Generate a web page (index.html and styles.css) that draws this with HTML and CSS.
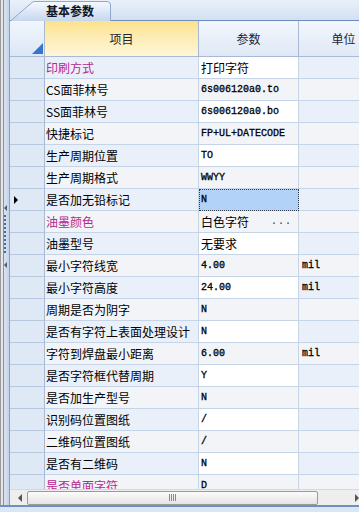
FILE: index.html
```html
<!DOCTYPE html>
<html lang="zh-CN">
<head>
  <meta charset="UTF-8">
  <title>基本参数</title>
  <link rel="stylesheet" href="styles.css">
</head>
<body>
  <div class="frame">
    <!-- left splitter strip -->
    <div class="side">
      <span class="arrow a1"></span>
      <span class="dots"></span>
      <span class="arrow a2"></span>
    </div>

    <div class="main">
      <!-- tab strip -->
      <div class="tabs">
        <div class="tab">
          <svg class="tab-bg" width="102" height="21" viewBox="0 0 102 21">
            <defs>
              <linearGradient id="tg" x1="0" y1="0" x2="0" y2="1">
                <stop offset="0" stop-color="#f6f9fe"/>
                <stop offset="1" stop-color="#c6d7ee"/>
              </linearGradient>
            </defs>
            <path d="M0.5 21 L22 2.5 Q23 1.5 25 1.5 L97 1.5 Q100.5 1.5 100.5 5 L100.5 21" fill="url(#tg)" stroke="#8ea9cf"/>
          </svg>
          <span class="tab-text">基本参数</span>
        </div>
      </div>

      <div class="grid">
        <div class="head">
          <div class="corner"><span class="tri"></span></div>
          <div class="hc item-h">项目</div>
          <div class="hc">参数</div>
          <div class="hc">单位</div>
        </div>

        <div class="rows">
          <div class="row odd"><div class="rh"></div><div class="c item pink">印刷方式</div><div class="c val cjk">打印字符</div><div class="c unit"></div></div>
          <div class="row"><div class="rh"></div><div class="c item">CS面菲林号</div><div class="c val">6s006120a0.to</div><div class="c unit"></div></div>
          <div class="row odd"><div class="rh"></div><div class="c item">SS面菲林号</div><div class="c val">6s006120a0.bo</div><div class="c unit"></div></div>
          <div class="row"><div class="rh"></div><div class="c item">快捷标记</div><div class="c val">FP+UL+DATECODE</div><div class="c unit"></div></div>
          <div class="row odd"><div class="rh"></div><div class="c item">生产周期位置</div><div class="c val">TO</div><div class="c unit"></div></div>
          <div class="row"><div class="rh"></div><div class="c item">生产周期格式</div><div class="c val">WWYY</div><div class="c unit"></div></div>
          <div class="row odd"><div class="rh cur"></div><div class="c item">是否加无铅标记</div><div class="c val sel">N</div><div class="c unit"></div></div>
          <div class="row"><div class="rh"></div><div class="c item pink">油墨颜色</div><div class="c val cjk">白色字符<span class="more">...</span></div><div class="c unit"></div></div>
          <div class="row odd"><div class="rh"></div><div class="c item">油墨型号</div><div class="c val cjk">无要求</div><div class="c unit"></div></div>
          <div class="row"><div class="rh"></div><div class="c item">最小字符线宽</div><div class="c val">4.00</div><div class="c unit">mil</div></div>
          <div class="row odd"><div class="rh"></div><div class="c item">最小字符高度</div><div class="c val">24.00</div><div class="c unit">mil</div></div>
          <div class="row"><div class="rh"></div><div class="c item">周期是否为阴字</div><div class="c val">N</div><div class="c unit"></div></div>
          <div class="row odd"><div class="rh"></div><div class="c item">是否有字符上表面处理设计</div><div class="c val">N</div><div class="c unit"></div></div>
          <div class="row"><div class="rh"></div><div class="c item">字符到焊盘最小距离</div><div class="c val">6.00</div><div class="c unit">mil</div></div>
          <div class="row odd"><div class="rh"></div><div class="c item">是否字符框代替周期</div><div class="c val">Y</div><div class="c unit"></div></div>
          <div class="row"><div class="rh"></div><div class="c item">是否加生产型号</div><div class="c val">N</div><div class="c unit"></div></div>
          <div class="row odd"><div class="rh"></div><div class="c item">识别码位置图纸</div><div class="c val">/</div><div class="c unit"></div></div>
          <div class="row"><div class="rh"></div><div class="c item">二维码位置图纸</div><div class="c val">/</div><div class="c unit"></div></div>
          <div class="row odd"><div class="rh"></div><div class="c item">是否有二维码</div><div class="c val">N</div><div class="c unit"></div></div>
          <div class="row"><div class="rh"></div><div class="c item pink">是否单面字符</div><div class="c val">D</div><div class="c unit"></div></div>
        </div>

        <!-- horizontal scrollbar -->
        <div class="hscroll">
          <span class="sb-arrow left"></span>
          <div class="track">
            <div class="thumb"><span class="grip"></span></div>
          </div>
          <span class="sb-arrow right"></span>
        </div>
      </div>
    </div>
  </div>
  <div class="bottom"></div>
</body>
</html>
```

FILE: styles.css
```css
* {
  margin: 0;
  padding: 0;
  box-sizing: border-box;
}
body {
  width: 359px;
  height: 512px;
  overflow: hidden;
  background: #dbe6f4;
  font-family: "Noto Sans CJK SC", "Noto Sans", sans-serif;
  font-size: 12px;
  color: #000;
}
.frame {
  display: flex;
  height: 505px;
}

/* left strip */
.side {
  width: 10px;
  flex: none;
  position: relative;
  background: linear-gradient(to right, #9a9a9a 0, #9a9a9a 1px, #e6e6e6 1px, #e6e6e6 3px, #7f8fa6 3px, #7f8fa6 4px, #d8e3f2 4px, #c4d3e9 9px, #8aa0c0 9px);
}
.side .arrow {
  position: absolute;
  left: 4px;
  width: 0;
  height: 0;
  border-top: 3px solid transparent;
  border-bottom: 3px solid transparent;
  border-right: 3px solid #4a5a78;
}
.side .a1 { top: 205px; }
.side .a2 { top: 262px; }
.side .dots {
  position: absolute;
  left: 4px;
  top: 215px;
  width: 2px;
  height: 38px;
  background: repeating-linear-gradient(to bottom, #4b6b9c 0, #4b6b9c 2px, transparent 2px, transparent 4px);
}

.main {
  flex: 1;
  min-width: 0;
  display: flex;
  flex-direction: column;
}

/* tabs */
.tabs {
  height: 21px;
  flex: none;
  background: linear-gradient(#e9f0fa, #d3e0f2);
  border-bottom: 1px solid #6e8fbd;
}
.tab {
  position: relative;
  width: 102px;
  height: 20px;
  display: flex;
  align-items: center;
  padding-left: 36px;
}
.tab-bg {
  position: absolute;
  left: 0;
  top: 0;
}
.tab-text {
  position: relative;
  font-weight: bold;
  font-size: 12px;
  color: #10151f;
  line-height: 20px;
  padding-top: 1px;
}

/* grid */
.grid {
  flex: 1;
  display: flex;
  flex-direction: column;
  min-height: 0;
  background: #fff;
}
.head {
  display: flex;
  height: 36px;
  flex: none;
  border-bottom: 1px solid #a7b9d4;
}
.corner {
  width: 35px;
  flex: none;
  position: relative;
  background: linear-gradient(#f1f6fc, #dce7f5);
  border-right: 1px solid #a7b9d4;
}
.corner .tri {
  position: absolute;
  right: 1px;
  bottom: 2px;
  width: 0;
  height: 0;
  border-left: 11px solid transparent;
  border-bottom: 11px solid #3a74c8;
}
.hc {
  width: 100px;
  flex: none;
  display: flex;
  align-items: center;
  justify-content: center;
  background: linear-gradient(#f3f7fd, #dfe8f5);
  border-right: 1px solid #a7b9d4;
  color: #1e2430;
}
.hc.item-h {
  width: 154px;
  background: linear-gradient(#fce28a, #fdecb4 45%, #fff6d8);
}
.hc:last-child {
  width: 90px;
}

.rows {
  flex: 1;
  overflow: hidden;
}
.row {
  display: flex;
  height: 22px;
}
.rh {
  width: 35px;
  flex: none;
  position: relative;
  background: #dfe8f5;
  border-right: 1px solid #a7b9d4;
  border-bottom: 1px solid #b6c7df;
}
.rh.cur::after {
  content: "";
  position: absolute;
  left: 4px;
  top: 7px;
  border-top: 4px solid transparent;
  border-bottom: 4px solid transparent;
  border-left: 4px solid #000;
}
.c {
  flex: none;
  height: 22px;
  display: flex;
  align-items: center;
  padding-left: 2px;
  white-space: nowrap;
  overflow: hidden;
  border-right: 1px solid #c6d4e8;
  border-bottom: 1px solid #c6d4e8;
  background: #f2f4f7;
}
.item {
  width: 154px;
  padding-left: 1px;
}
.val {
  width: 100px;
  font-family: "Liberation Mono", monospace;
  font-size: 10px;
  color: #000;
  position: relative;
  -webkit-text-stroke: 0.3px #000;
}
.val.cjk {
  font-family: "Noto Sans CJK SC", sans-serif;
  font-size: 12px;
  -webkit-text-stroke: 0;
}
.unit {
  width: 90px;
  font-family: "Liberation Mono", monospace;
  font-size: 10px;
  padding-left: 3px;
  -webkit-text-stroke: 0.3px #000;
}
.row.odd .item,
.row.odd .unit {
  background: #e9f0fa;
}
.row.odd .val {
  background: #fff;
}
.val.sel {
  background: #b3d2f7 !important;
  outline: 1px dotted #303a4a;
  outline-offset: -1px;
}
.more {
  position: absolute;
  right: 6px;
  font-family: "Liberation Mono", monospace;
  font-size: 10px;
  letter-spacing: 1px;
  color: #333;
  -webkit-text-stroke: 0;
}
.pink {
  color: #b8268f;
}

/* scrollbar */
.hscroll {
  height: 16px;
  flex: none;
  display: flex;
  align-items: center;
  background: #eeeeee;
  border-top: 1px solid #d8d8d8;
}
.sb-arrow {
  width: 0;
  height: 0;
  border-top: 4px solid transparent;
  border-bottom: 4px solid transparent;
  flex: none;
}
.sb-arrow.left {
  border-right: 4px solid #555;
  margin: 0 5px 0 8px;
}
.sb-arrow.right {
  border-left: 4px solid #555;
  margin: 0 0 0 32px;
}
.track {
  flex: 1;
  height: 14px;
}
.thumb {
  width: 291px;
  height: 14px;
  border: 1px solid #9a9a9a;
  border-radius: 2px;
  background: linear-gradient(#fbfbfb, #e4e4e4);
  display: flex;
  align-items: center;
  justify-content: center;
}
.grip {
  width: 7px;
  height: 7px;
  background: repeating-linear-gradient(to right, #8a8a8a 0, #8a8a8a 1px, transparent 1px, transparent 2px);
}

.bottom {
  height: 7px;
  border-top: 2px solid #6f8fbf;
  background: #dbe6f4;
}
```
